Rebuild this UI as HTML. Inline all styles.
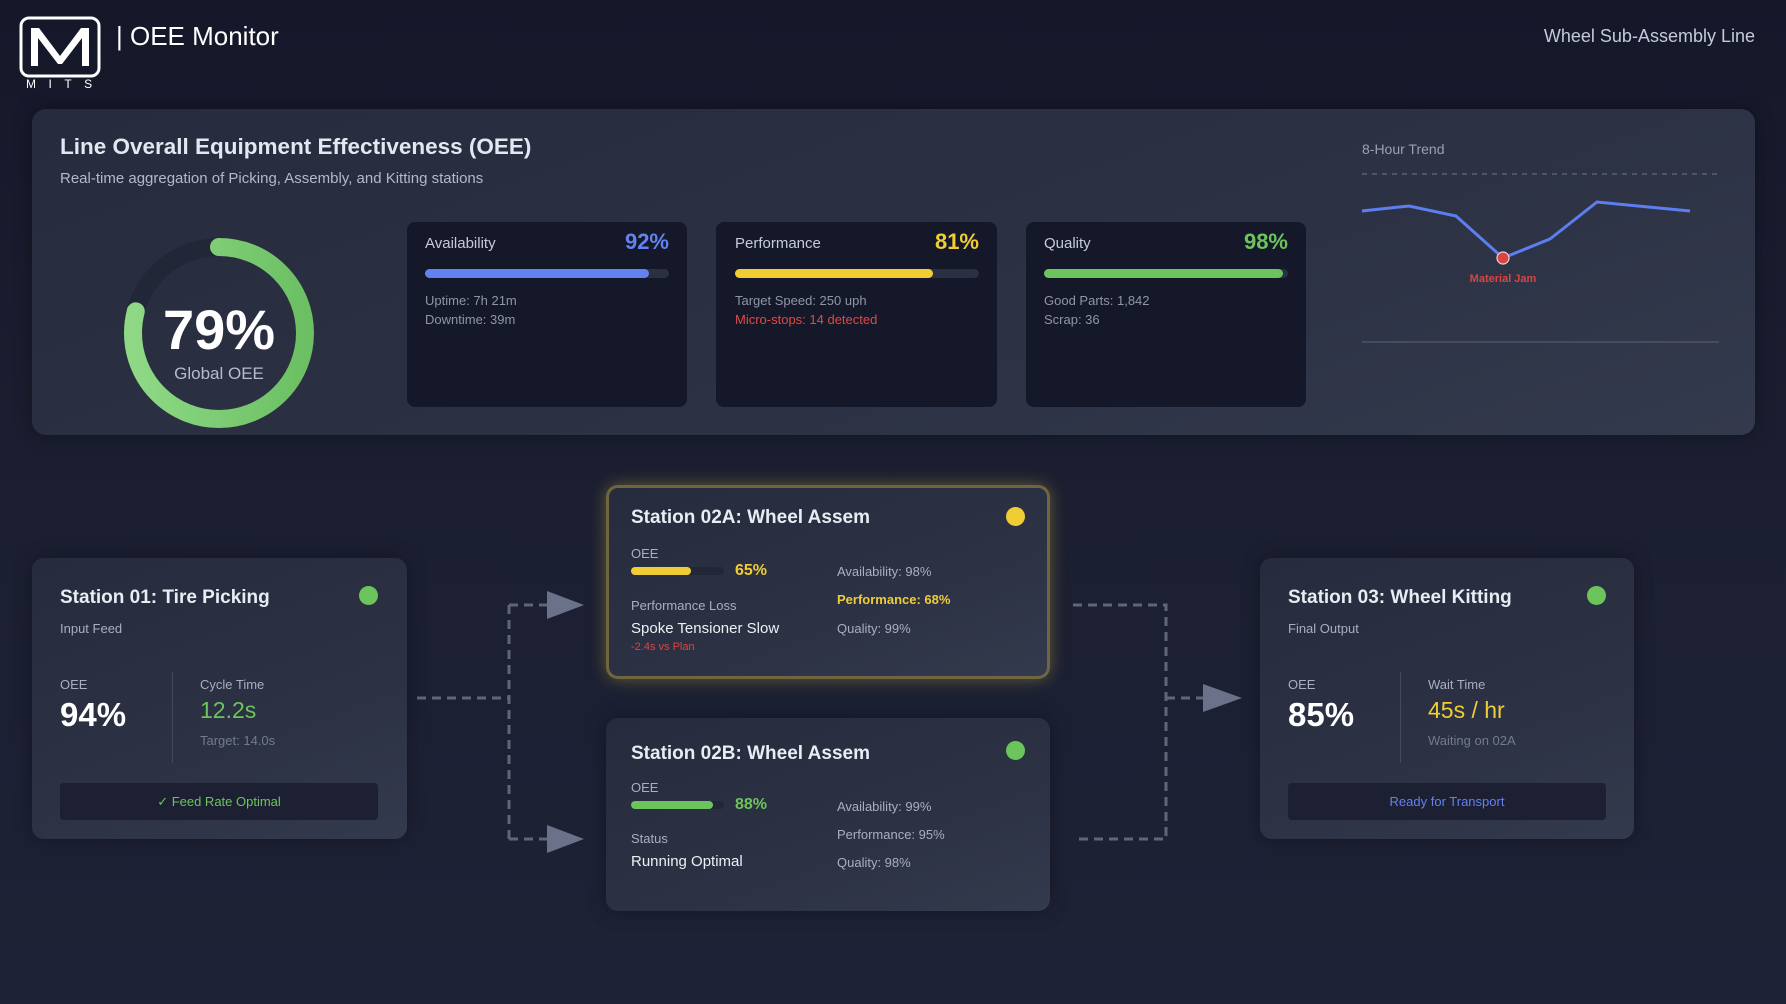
<!DOCTYPE html>
<html><head><meta charset="utf-8"><style>
*{margin:0;padding:0;box-sizing:border-box}
body{width:1786px;height:1004px;overflow:hidden;background:linear-gradient(180deg,#141829 0%,#1b1f31 50%,#1e2236 100%);font-family:"Liberation Sans",sans-serif;color:#e6e9f0;position:relative}
.a{position:absolute;line-height:1;white-space:nowrap}
.panel{position:absolute;border-radius:14px;background:linear-gradient(160deg,#262b3d 0%,#2c3244 60%,#343a4d 100%);box-shadow:0 0 18px rgba(0,0,0,.35)}
.card{position:absolute;border-radius:8px;background:#151829}
.bar{position:absolute;height:9px;border-radius:5px;background:#2a2f42}
.bar i{display:block;height:100%;border-radius:5px}
.sb{background:#222737}
.dot{position:absolute;width:19px;height:19px;border-radius:50%}
</style></head><body>
<!-- logo -->
<svg style="position:absolute;left:19px;top:16px" width="84" height="76">
<rect x="2" y="2" width="78" height="58" rx="8" fill="none" stroke="#fff" stroke-width="3"/>
<path d="M12 50 V12 H20 L41 40 L62 12 H70 V50 H63 V22 L43 48 H39 L19 22 V50 Z" fill="#fff"/>
</svg>
<div class="a" style="left:26px;top:78px;font-size:12px;letter-spacing:12.5px;color:#fff">MITS</div>
<div class="a" style="left:116px;top:23px;font-size:26px;color:#fff">| OEE Monitor</div>
<div class="a" style="right:31px;top:27px;font-size:18px;color:#c5cad6">Wheel Sub-Assembly Line</div>

<!-- top panel -->
<div class="panel" style="left:32px;top:109px;width:1723px;height:326px"></div>
<div class="a" style="left:60px;top:136px;font-size:22.5px;font-weight:bold;color:#e3e7f2">Line Overall Equipment Effectiveness (OEE)</div>
<div class="a" style="left:60px;top:171px;font-size:15px;color:#b3b9c8">Real-time aggregation of Picking, Assembly, and Kitting stations</div>
<svg style="position:absolute;left:119px;top:233px" width="200" height="200">
<defs><linearGradient id="g" x1="0" y1="0" x2="0" y2="1"><stop offset="0" stop-color="#8fd986"/><stop offset="1" stop-color="#6cbf63"/></linearGradient></defs>
<circle cx="100" cy="100" r="86" fill="none" stroke="#222738" stroke-width="18"/>
<circle cx="100" cy="100" r="86" fill="none" stroke="url(#g)" stroke-width="18" stroke-linecap="round" stroke-dasharray="427 540" transform="rotate(-90 100 100)"/>
</svg>
<div class="a" style="left:119px;width:200px;text-align:center;top:302px;font-size:56px;font-weight:bold;color:#fff">79%</div>
<div class="a" style="left:119px;width:200px;text-align:center;top:365px;font-size:17px;color:#b6bcca">Global OEE</div>

<div class="card" style="left:407px;top:222px;width:280px;height:185px"></div>
<div class="a" style="left:425px;top:236px;font-size:15px;color:#c6cbd8">Availability</div>
<div class="a" style="right:1117px;top:231px;font-size:22px;font-weight:bold;color:#6381f0">92%</div>
<div class="bar" style="left:425px;top:269px;width:244px"><i style="width:92%;background:#6381f0"></i></div>
<div class="a" style="left:425px;top:294px;font-size:13px;color:#8f96a8">Uptime: 7h 21m</div>
<div class="a" style="left:425px;top:313px;font-size:13px;color:#8f96a8">Downtime: 39m</div>

<div class="card" style="left:716px;top:222px;width:281px;height:185px"></div>
<div class="a" style="left:735px;top:236px;font-size:15px;color:#c6cbd8">Performance</div>
<div class="a" style="right:807px;top:231px;font-size:22px;font-weight:bold;color:#f0cd35">81%</div>
<div class="bar" style="left:735px;top:269px;width:244px"><i style="width:81%;background:#f0cd35"></i></div>
<div class="a" style="left:735px;top:294px;font-size:13px;color:#8f96a8">Target Speed: 250 uph</div>
<div class="a" style="left:735px;top:313px;font-size:13px;color:#e04a44">Micro-stops: 14 detected</div>

<div class="card" style="left:1026px;top:222px;width:280px;height:185px"></div>
<div class="a" style="left:1044px;top:236px;font-size:15px;color:#c6cbd8">Quality</div>
<div class="a" style="right:498px;top:231px;font-size:22px;font-weight:bold;color:#6cc45d">98%</div>
<div class="bar" style="left:1044px;top:269px;width:244px"><i style="width:98%;background:#6cc45d"></i></div>
<div class="a" style="left:1044px;top:294px;font-size:13px;color:#8f96a8">Good Parts: 1,842</div>
<div class="a" style="left:1044px;top:313px;font-size:13px;color:#8f96a8">Scrap: 36</div>

<div class="a" style="left:1362px;top:142px;font-size:14px;color:#9aa1b2">8-Hour Trend</div>
<svg style="position:absolute;left:1360px;top:168px" width="362" height="180">
<line x1="2" y1="6" x2="359" y2="6" stroke="#5a6174" stroke-width="1.5" stroke-dasharray="5 5"/>
<line x1="2" y1="174" x2="359" y2="174" stroke="#4d5467" stroke-width="1.5"/>
<polyline points="2,43 49,38 96,48 143,90 190,71 237,34 330,43" fill="none" stroke="#5d7ef0" stroke-width="3"/>
<circle cx="143" cy="90" r="6" fill="#d9463f" stroke="#f0d0d0" stroke-width="1.2"/>
<text x="143" y="114" text-anchor="middle" font-family="Liberation Sans" font-size="11" font-weight="bold" fill="#d9463f">Material Jam</text>
</svg>

<!-- connectors -->
<svg style="position:absolute;left:0;top:0" width="1786" height="1004">
<g fill="none" stroke="#5f6678" stroke-width="3" stroke-dasharray="9 6">
<path d="M417 698 H509"/><path d="M509 605 V839"/><path d="M509 605 H547"/><path d="M509 839 H547"/>
<path d="M1073 605 H1166 V839 H1073"/><path d="M1166 698 H1203"/>
</g>
<g fill="#6a7289"><path d="M547 591 L584 605 L547 619Z"/><path d="M547 825 L584 839 L547 853Z"/><path d="M1203 684 L1242 698 L1203 712Z"/></g>
</svg>

<!-- station 01 -->
<div class="panel" style="left:32px;top:558px;width:375px;height:281px;border-radius:12px"></div>
<div class="a" style="left:60px;top:588px;font-size:19px;font-weight:bold;color:#e9ecf3">Station 01: Tire Picking</div>
<div class="dot" style="left:359px;top:586px;background:#6cc45d"></div>
<div class="a" style="left:60px;top:622px;font-size:13px;color:#a9afbe">Input Feed</div>
<div class="a" style="left:60px;top:678px;font-size:13px;color:#a9afbe">OEE</div>
<div class="a" style="left:60px;top:698px;font-size:33px;font-weight:bold;color:#fff">94%</div>
<div style="position:absolute;left:172px;top:672px;width:1px;height:91px;background:#434a5d"></div>
<div class="a" style="left:200px;top:678px;font-size:13px;color:#a9afbe">Cycle Time</div>
<div class="a" style="left:200px;top:699px;font-size:23px;color:#6cc45d">12.2s</div>
<div class="a" style="left:200px;top:734px;font-size:13px;color:#727a8c">Target: 14.0s</div>
<div style="position:absolute;left:60px;top:783px;width:318px;height:37px;border-radius:4px;background:#1c2032;color:#6cc45d;font-size:13px;text-align:center;line-height:37px">✓ Feed Rate Optimal</div>

<!-- station 02A -->
<div class="panel" style="left:606px;top:485px;width:444px;height:194px;border-radius:12px;border:3px solid #6e6641;box-shadow:0 0 16px rgba(210,180,60,.4)"></div>
<div class="a" style="left:631px;top:508px;font-size:19px;font-weight:bold;color:#e9ecf3">Station 02A: Wheel Assem</div>
<div class="dot" style="left:1006px;top:507px;background:#f0cd35"></div>
<div class="a" style="left:631px;top:547px;font-size:13px;color:#a9afbe">OEE</div>
<div class="bar sb" style="left:631px;top:567px;width:93px;height:8px"><i style="width:65%;background:#f0cd35"></i></div>
<div class="a" style="left:735px;top:563px;font-size:16px;font-weight:bold;color:#f0cd35">65%</div>
<div class="a" style="left:631px;top:599px;font-size:13px;color:#a9afbe">Performance Loss</div>
<div class="a" style="left:631px;top:621px;font-size:15px;color:#eef0f5">Spoke Tensioner Slow</div>
<div class="a" style="left:631px;top:642px;font-size:11px;color:#d9463f">-2.4s vs Plan</div>
<div class="a" style="left:837px;top:565px;font-size:13px;color:#a9afbe">Availability: 98%</div>
<div class="a" style="left:837px;top:593px;font-size:13px;font-weight:bold;color:#f0cd35">Performance: 68%</div>
<div class="a" style="left:837px;top:622px;font-size:13px;color:#a9afbe">Quality: 99%</div>

<!-- station 02B -->
<div class="panel" style="left:606px;top:718px;width:444px;height:193px;border-radius:12px"></div>
<div class="a" style="left:631px;top:744px;font-size:19px;font-weight:bold;color:#e9ecf3">Station 02B: Wheel Assem</div>
<div class="dot" style="left:1006px;top:741px;background:#6cc45d"></div>
<div class="a" style="left:631px;top:781px;font-size:13px;color:#a9afbe">OEE</div>
<div class="bar sb" style="left:631px;top:801px;width:93px;height:8px"><i style="width:88%;background:#6cc45d"></i></div>
<div class="a" style="left:735px;top:797px;font-size:16px;font-weight:bold;color:#6cc45d">88%</div>
<div class="a" style="left:631px;top:832px;font-size:13px;color:#a9afbe">Status</div>
<div class="a" style="left:631px;top:854px;font-size:15px;color:#eef0f5">Running Optimal</div>
<div class="a" style="left:837px;top:800px;font-size:13px;color:#a9afbe">Availability: 99%</div>
<div class="a" style="left:837px;top:828px;font-size:13px;color:#a9afbe">Performance: 95%</div>
<div class="a" style="left:837px;top:856px;font-size:13px;color:#a9afbe">Quality: 98%</div>

<!-- station 03 -->
<div class="panel" style="left:1260px;top:558px;width:374px;height:281px;border-radius:12px"></div>
<div class="a" style="left:1288px;top:588px;font-size:19px;font-weight:bold;color:#e9ecf3">Station 03: Wheel Kitting</div>
<div class="dot" style="left:1587px;top:586px;background:#6cc45d"></div>
<div class="a" style="left:1288px;top:622px;font-size:13px;color:#a9afbe">Final Output</div>
<div class="a" style="left:1288px;top:678px;font-size:13px;color:#a9afbe">OEE</div>
<div class="a" style="left:1288px;top:698px;font-size:33px;font-weight:bold;color:#fff">85%</div>
<div style="position:absolute;left:1400px;top:672px;width:1px;height:91px;background:#434a5d"></div>
<div class="a" style="left:1428px;top:678px;font-size:13px;color:#a9afbe">Wait Time</div>
<div class="a" style="left:1428px;top:699px;font-size:23px;color:#f0cd35">45s / hr</div>
<div class="a" style="left:1428px;top:734px;font-size:13px;color:#727a8c">Waiting on 02A</div>
<div style="position:absolute;left:1288px;top:783px;width:318px;height:37px;border-radius:4px;background:#1c2032;color:#6381f0;font-size:13px;text-align:center;line-height:37px">Ready for Transport</div>
</body></html>
